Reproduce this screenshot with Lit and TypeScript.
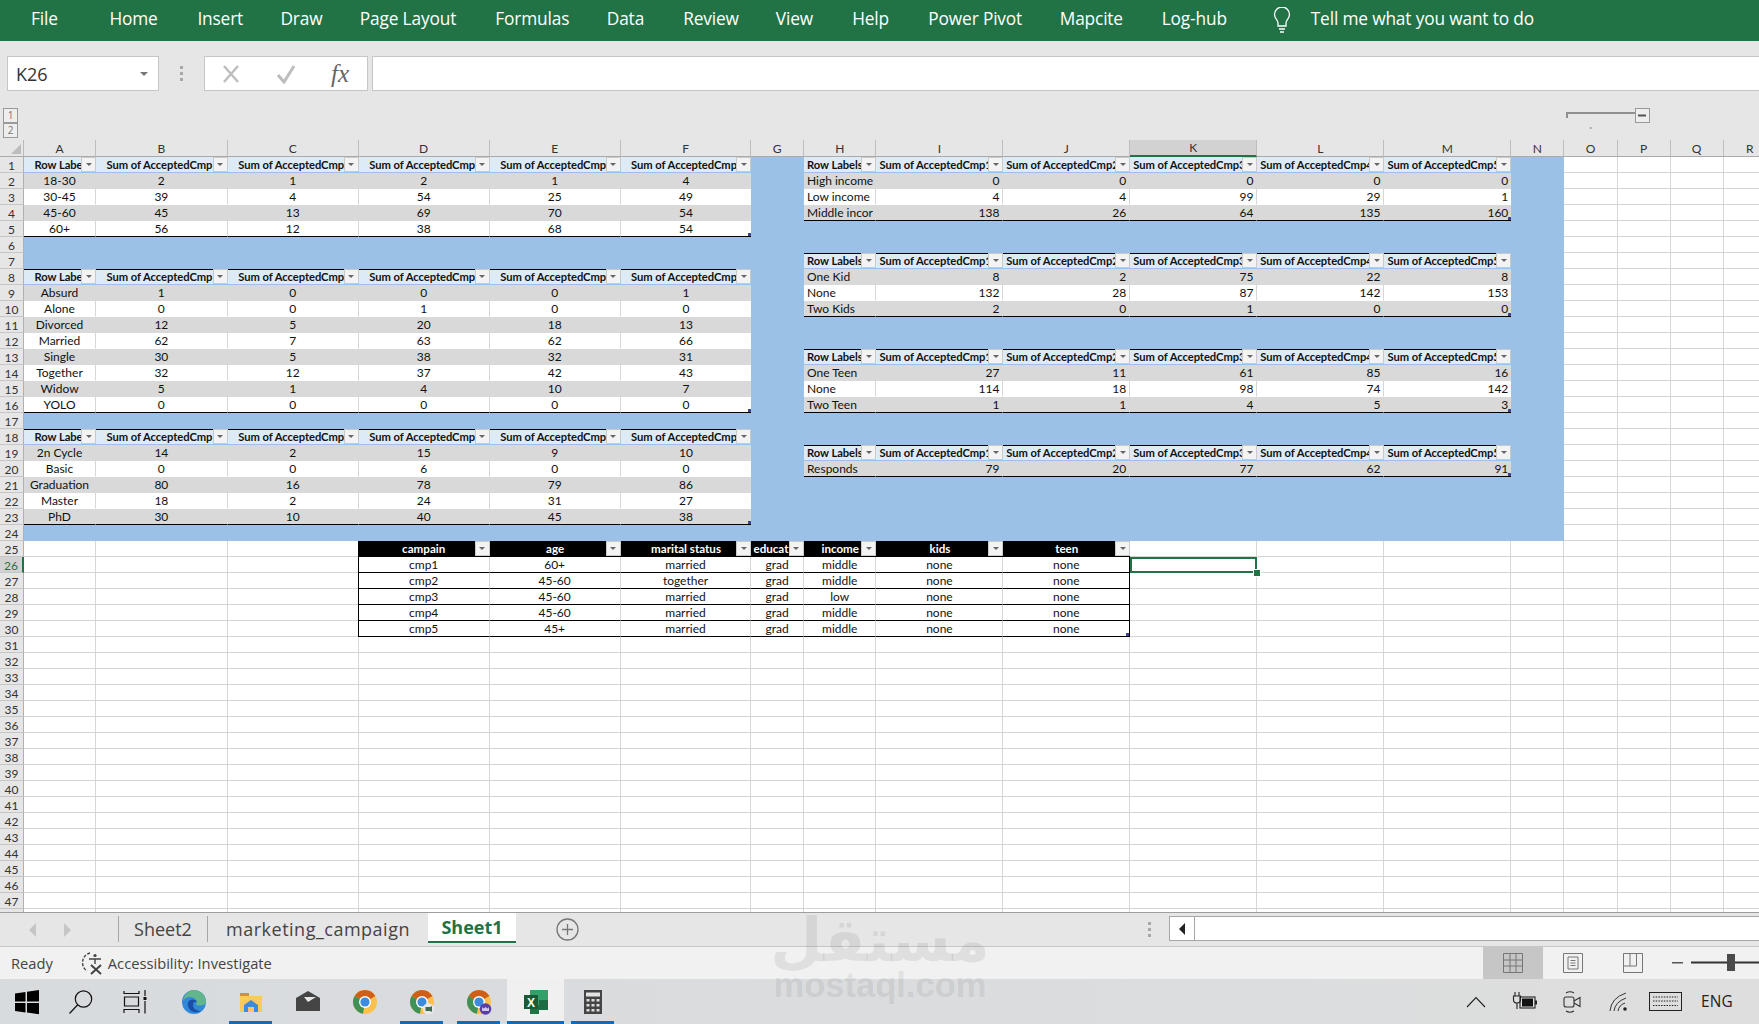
import { LitElement, css, html, svg } from "lit";
import { customElement } from "lit/decorators.js";

const COL_WIDTHS = [72, 131.7, 131, 131, 130.9, 130.9, 52.5, 72.5, 126.9, 126.8, 127.2, 127.1, 126.9, 53.1, 53.1, 53.1, 53.1, 53.2];
const LETTERS = "ABCDEFGHIJKLMNOPQR".split("");
const ROW_COUNT = 48;

type Cell = { text: string; cls: string; filter?: boolean };

const key = (c: number, r: number) => `${c}:${r}`;

function buildCells() {
  const cells = new Map<string, Cell>();
  // blue block behind the pivots
  for (let r = 1; r <= 24; r++) {
    for (let c = 0; c <= 13; c++) cells.set(key(c, r), { text: "", cls: "blue" });
  }

  const pivot = (col: number, row: number, head: string[], rows: (string | number)[][], side: "left" | "right", top: boolean) => {
    head.forEach((h, i) => {
      cells.set(key(col + i, row), {
        text: h,
        cls: `hdr ${side === "left" ? "hdr-l" : "hdr-r"} ${top ? "top" : ""}`,
        filter: true,
      });
    });
    rows.forEach((vals, ri) => {
      const isLast = ri === rows.length - 1;
      vals.forEach((v, ci) => {
        const align = side === "left" ? "center" : ci === 0 ? "start" : "end";
        const band = ri % 2 === 0 ? "band" : "plain";
        const edge = ci === vals.length - 1 ? "edge" : "";
        const corner = isLast && ci === vals.length - 1 ? "corner" : "";
        cells.set(key(col + ci, row + 1 + ri), {
          text: String(v),
          cls: `${align} ${band} ${edge} ${isLast ? "last" : ""} ${corner}`,
        });
      });
    });
  };

  const leftHead = ["Row Labe", ...Array(5).fill("Sum of AcceptedCmp")];
  const rightHead = ["Row Labels", "Sum of AcceptedCmp1", "Sum of AcceptedCmp2", "Sum of AcceptedCmp3", "Sum of AcceptedCmp4", "Sum of AcceptedCmp5"];

  pivot(0, 1, leftHead, [
    ["18-30", 2, 1, 2, 1, 4],
    ["30-45", 39, 4, 54, 25, 49],
    ["45-60", 45, 13, 69, 70, 54],
    ["60+", 56, 12, 38, 68, 54],
  ], "left", false);
  pivot(0, 8, leftHead, [
    ["Absurd", 1, 0, 0, 0, 1],
    ["Alone", 0, 0, 1, 0, 0],
    ["Divorced", 12, 5, 20, 18, 13],
    ["Married", 62, 7, 63, 62, 66],
    ["Single", 30, 5, 38, 32, 31],
    ["Together", 32, 12, 37, 42, 43],
    ["Widow", 5, 1, 4, 10, 7],
    ["YOLO", 0, 0, 0, 0, 0],
  ], "left", true);
  pivot(0, 18, leftHead, [
    ["2n Cycle", 14, 2, 15, 9, 10],
    ["Basic", 0, 0, 6, 0, 0],
    ["Graduation", 80, 16, 78, 79, 86],
    ["Master", 18, 2, 24, 31, 27],
    ["PhD", 30, 10, 40, 45, 38],
  ], "left", true);

  pivot(7, 1, rightHead, [
    ["High income", 0, 0, 0, 0, 0],
    ["Low income", 4, 4, 99, 29, 1],
    ["Middle incor", 138, 26, 64, 135, 160],
  ], "right", false);
  pivot(7, 7, rightHead, [
    ["One Kid", 8, 2, 75, 22, 8],
    ["None", 132, 28, 87, 142, 153],
    ["Two Kids", 2, 0, 1, 0, 0],
  ], "right", true);
  pivot(7, 13, rightHead, [
    ["One Teen", 27, 11, 61, 85, 16],
    ["None", 114, 18, 98, 74, 142],
    ["Two Teen", 1, 1, 4, 5, 3],
  ], "right", true);
  pivot(7, 19, rightHead, [["Responds", 79, 20, 77, 62, 91]], "right", true);

  // black summary table
  ["campain", "age", "marital status", "educat", "income", "kids", "teen"].forEach((h, i) => {
    const extra = `${h === "educat" ? "black-l" : ""} ${i === 0 ? "box-l" : ""}`;
    cells.set(key(3 + i, 25), { text: h, cls: `black ${extra}`, filter: true });
  });
  [
    ["cmp1", "60+", "married", "grad", "middle", "none", "none"],
    ["cmp2", "45-60", "together", "grad", "middle", "none", "none"],
    ["cmp3", "45-60", "married", "grad", "low", "none", "none"],
    ["cmp4", "45-60", "married", "grad", "middle", "none", "none"],
    ["cmp5", "45+", "married", "grad", "middle", "none", "none"],
  ].forEach((vals, ri) => {
    vals.forEach((v, ci) => {
      const extra = `${ci === 0 ? "box-l" : ""} ${ci === 6 ? "box-r" : ""} ${ri === 4 && ci === 6 ? "corner" : ""}`;
      cells.set(key(3 + ci, 26 + ri), { text: v, cls: `center boxed ${extra}` });
    });
  });

  cells.set(key(10, 26), { text: "", cls: "sel" });
  return cells;
}

const CELLS = buildCells();

const RIBBON = ["File", "Home", "Insert", "Draw", "Page Layout", "Formulas", "Data", "Review", "View", "Help", "Power Pivot", "Mapcite", "Log-hub"];

const chrome = (badge?: unknown) => svg`
  <svg width="26" height="26" viewBox="0 0 26 26">
    <circle cx="13" cy="13" r="12" fill="#fbc04e"/>
    <path d="M13 13 L2.6 7 A12 12 0 0 1 23.4 7 Z" fill="#cf5f17"/>
    <path d="M13 13 L2.6 7 A12 12 0 0 0 11 24.8 Z" fill="#3f9157"/>
    <circle cx="13" cy="13" r="6" fill="#fff"/>
    <circle cx="13" cy="13" r="4.6" fill="#3d8bdc"/>
    ${badge}
  </svg>`;

const TASK_ICONS = [
  { cls: "narrow", icon: svg`<svg width="26" height="26" viewBox="0 0 26 26" fill="#000"><path d="M1 4.5 L11.5 3 V12.5 H1Z M13 2.8 L25 1 V12.5 H13Z M1 14 H11.5 V23.5 L1 22Z M13 14 H25 V25.2 L13 23.6Z"/></svg>` },
  { cls: "narrow", icon: svg`<svg width="26" height="26" viewBox="0 0 26 26" fill="none" stroke="#111" stroke-width="1.2"><circle cx="15.5" cy="10" r="8.2"/><path d="M9.5 16 L1.5 24.5"/></svg>` },
  { cls: "narrow gap", icon: svg`<svg width="26" height="26" viewBox="0 0 26 26" fill="none" stroke="#111" stroke-width="1.2"><path d="M2 2 V4.5 H17 V2 M2.5 8 H16.5 V17 H2.5Z M2 24 V20.5 H17 V24 M23 1 V7 M23 12 V24.5"/><rect x="21.5" y="8" width="3" height="3" fill="#111" stroke="none"/></svg>` },
  { icon: svg`<svg width="26" height="26" viewBox="0 0 26 26"><circle cx="13" cy="13" r="12" fill="#2f88d8"/><path d="M13 1 A12 12 0 0 1 25 13 C25 16 20 17.5 15 16 C17 12 14 8 9 8 C5 8 3 10 2 12 C3 5 8 1 13 1Z" fill="#63b58d"/><path d="M14 11 C9 9 6 13 7 17 C8 22 14 25 20 22 C16 22 12 20 12 16 C12 13 14 12 16 13 C16 12 15 11.5 14 11Z" fill="#1a4fa8"/></svg>` },
  { active: true, icon: svg`<svg width="26" height="26" viewBox="0 0 26 26"><path d="M2 4 H11 V8 H2Z" fill="#c6933f"/><rect x="2" y="7" width="22" height="16" fill="#fcc95c"/><path d="M6 23 V16 L13 11 L20 16 V23 H16 V18 H10 V23Z" fill="#3b8be0"/></svg>` },
  { icon: svg`<svg width="26" height="26" viewBox="0 0 26 26"><path d="M1 9 L13 2 L25 9 V22 H1Z" fill="#454545"/><path d="M9 8 H21 L13 13Z" fill="#e8e8e8"/></svg>` },
  { icon: chrome() },
  { active: true, icon: chrome(svg`<circle cx="19.5" cy="20" r="5.8" fill="#e8e8e8"/><path d="M16.5 18 H21 L23 17 V23 L21 22 H16.5Z" fill="#3f6b4f"/>`) },
  { active: true, icon: chrome(svg`<circle cx="19.5" cy="20" r="5.8" fill="#5a3ea6"/><path d="M16 22 V18 L17.5 19.5 L19.5 18 L21.5 19.5 L23 18 V22Z" fill="#cfc6ea"/>`) },
  { active: true, current: true, icon: svg`<svg width="26" height="26" viewBox="0 0 26 26"><path d="M7 1 H25 V21 H7Z" fill="#33a067"/><path d="M16 11 H25 V21 H16Z" fill="#1d6b42"/><path d="M7 16 H16 V25 H7Z" fill="#217346"/><rect x="1" y="6" width="14" height="14" fill="#185c37"/><text x="8" y="17.5" text-anchor="middle" font-family="Liberation Sans" font-weight="700" font-size="12" fill="#fff">X</text></svg>` },
  { active: true, icon: svg`<svg width="26" height="26" viewBox="0 0 26 26"><rect x="4" y="1" width="18" height="24" fill="#454545"/><rect x="6" y="3.5" width="14" height="4" fill="#e4e4e4"/><path d="M6.5 10 h3 v2.5 h-3z M11.5 10 h3 v2.5 h-3z M16.5 10 h3 v2.5 h-3z M6.5 15 h3 v2.5 h-3z M11.5 15 h3 v2.5 h-3z M16.5 15 h3 v2.5 h-3z M6.5 20 h3 v2.5 h-3z M11.5 20 h3 v2.5 h-3z M16.5 20 h3 v2.5 h-3z" fill="#ddd"/></svg>` },
];

@customElement("app-root")
export class AppRoot extends LitElement {
  static override styles = css`
    :host {
      display: block;
      width: 1759px;
      height: 1024px;
      overflow: hidden;
      position: relative;
      font-family: "Open Sans", "Liberation Sans", sans-serif;
      background: #e6e6e6;
    }
    .app {
      display: flex;
      flex-direction: column;
      height: 1024px;
    }

    /* ---------- ribbon ---------- */
    .ribbon {
      height: 41px;
      box-sizing: border-box;
      background: #217346;
      color: #fff;
      padding: 0 0 5px 31px;
      display: grid;
      grid-template-columns: 78.4px 88px 83px 79.4px 135.5px 111.5px 76.5px 92.5px 76.4px 76.2px 131.4px 102px 111px 38px auto;
      align-items: center;
      font-size: 17.3px;
      letter-spacing: -0.15px;
    }
    .ribbon svg {
      display: block;
      margin-top: 5px;
    }

    /* ---------- formula bar ---------- */
    .formula {
      display: flex;
      height: 35px;
      margin-top: 15px;
      padding-left: 7px;
    }
    .name-box {
      width: 152px;
      background: #fff;
      border: 1px solid #c6c6c6;
      box-sizing: border-box;
      display: flex;
      align-items: center;
      justify-content: space-between;
      padding: 0 10px 0 8px;
      font-size: 18px;
      color: #333;
    }
    .caret {
      width: 0;
      height: 0;
      border: 4px solid transparent;
      border-top: 4px solid #777;
      border-bottom: 0;
    }
    .grip {
      width: 45px;
      display: flex;
      align-items: center;
      justify-content: center;
    }
    .fx-box {
      width: 164px;
      background: #fff;
      border: 1px solid #c6c6c6;
      box-sizing: border-box;
      display: flex;
      align-items: center;
      padding-left: 16px;
      gap: 35px;
    }
    .fx {
      font-family: "Liberation Serif", serif;
      font-style: italic;
      font-size: 25px;
      color: #666;
    }
    .formula-input {
      flex: 1;
      margin-left: 4px;
      background: #fff;
      border: 1px solid #c6c6c6;
      border-right: 0;
    }

    /* ---------- outline strip ---------- */
    .outline {
      height: 49px;
      box-sizing: border-box;
      padding: 17px 0 0 3px;
      display: flex;
      justify-content: space-between;
    }
    .levels {
      display: flex;
      flex-direction: column;
    }
    .levels span {
      width: 15px;
      height: 15px;
      box-sizing: border-box;
      border: 1px solid #9a9a9a;
      background: #eee;
      font-size: 10px;
      line-height: 13px;
      text-align: center;
      color: #777;
    }
    .slider {
      margin-right: 109px;
      width: 84px;
      height: 22px;
    }

    /* ---------- sheet grid ---------- */
    .sheet {
      height: 772px;
      overflow: hidden;
      display: grid;
      grid-template-rows: 17px repeat(47, 16px) 16px;
      font-family: Lato, "Liberation Sans", sans-serif;
      font-size: 12px;
      color: #111;
      background: #fff;
    }
    .sheet > div {
      box-sizing: border-box;
      min-width: 0;
    }
    .corner-hd {
      background: #e6e6e6;
      border-right: 1px solid #bbb;
      border-bottom: 1px solid #aaa;
      position: relative;
    }
    .corner-hd::after {
      content: "";
      position: absolute;
      right: 2px;
      bottom: 2px;
      width: 10px;
      height: 10px;
      background: #bcbcbc;
      clip-path: polygon(100% 0, 100% 100%, 0 100%);
    }
    .col-hd {
      background: #e6e6e6;
      border-right: 1px solid #bdbdbd;
      border-bottom: 1px solid #aaa;
      display: flex;
      align-items: center;
      justify-content: center;
      font-size: 12px;
      color: #333;
    }
    .col-hd.on {
      background: #d2d2d2;
      border-bottom: 2px solid #217346;
    }
    .row-hd {
      background: #e6e6e6;
      border-right: 1px solid #b0b0b0;
      border-bottom: 1px solid #c6c6c6;
      padding-top: 1px;
      display: flex;
      align-items: center;
      justify-content: center;
      font-size: 12px;
      color: #333;
    }
    .row-hd.on {
      background: #d2d2d2;
      border-right: 2px solid #217346;
      color: #217346;
    }
    .cell {
      position: relative;
      overflow: hidden;
      white-space: nowrap;
      line-height: 16px;
      border-right: 1px solid #d6d6d6;
      border-bottom: 1px solid #d6d6d6;
      background: #fff;
    }
    .cell.blue {
      background: #9bc2e6;
      border-color: #9bc2e6;
    }
    .cell.center {
      text-align: center;
    }
    .cell.start {
      text-align: left;
      padding-left: 3px;
    }
    .cell.end {
      text-align: right;
      padding-right: 3px;
    }
    .cell.band {
      background: #d9d9d9;
      border-color: #d9d9d9;
    }
    .cell.plain {
      border-bottom-color: #fff;
    }
    .cell.edge {
      border-right: 0;
    }
    .cell.last {
      border-bottom: 1px solid #000;
    }
    .cell.hdr {
      background: #ddebf7;
      border: 0;
      border-bottom: 1px solid #9bc2e6;
      font-weight: 700;
      padding-right: 15px;
      font-size: 11.2px;
      letter-spacing: -0.05px;
    }
    .cell.hdr-l {
      padding-left: 10.5px;
    }
    .cell.hdr-r {
      padding-left: 3px;
    }
    .cell.hdr.top {
      box-shadow: inset 0 1px 0 #000;
    }
    .cell.black {
      background: #000;
      border: 0;
      color: #fff;
      font-weight: 700;
      text-align: center;
      font-size: 11.6px;
    }
    .cell.black-l {
      text-align: left;
      padding-left: 2px;
    }
    .cell.boxed {
      border-bottom: 1px solid #000;
    }
    .cell.box-l {
      margin-left: -1px;
    }
    .cell.boxed.box-l {
      border-left: 1px solid #000;
    }
    .cell.box-r {
      border-right: 1px solid #000;
    }
    .cell.corner::after {
      content: "";
      position: absolute;
      right: 0;
      bottom: 0;
      width: 3px;
      height: 3px;
      background: #3f3f9f;
    }
    .cell.sel {
      overflow: visible;
      z-index: 2;
      border: 0;
      box-shadow: inset 0 0 0 2px #217346;
    }
    .cell.sel::after {
      content: "";
      position: absolute;
      right: -3px;
      bottom: -3px;
      width: 6px;
      height: 6px;
      background: #217346;
      outline: 1px solid #fff;
    }
    .filter {
      position: absolute;
      right: 0;
      top: 0;
      width: 15px;
      height: 15px;
      box-sizing: border-box;
      border: 1px solid #cacaca;
      background: #f3f3f3;
      display: flex;
      align-items: center;
      justify-content: center;
    }
    .filter::after {
      content: "";
      border: 3px solid transparent;
      border-top: 3px solid #666;
      border-bottom: 0;
    }

    /* ---------- sheet tabs ---------- */
    .tabs {
      height: 34px;
      box-sizing: border-box;
      border-top: 1px solid #9e9e9e;
      display: flex;
      font-size: 18px;
      color: #444;
    }
    .nav {
      width: 118px;
      display: flex;
      align-items: center;
      padding-left: 29px;
      box-sizing: border-box;
      gap: 28px;
    }
    .tab {
      height: 26px;
      margin-top: 3px;
      box-sizing: border-box;
      border-left: 1px solid #a6a6a6;
      display: flex;
      align-items: center;
      justify-content: center;
    }
    .tab.a {
      width: 89px;
    }
    .tab.b {
      width: 221px;
      letter-spacing: 0.5px;
    }
    .tab.on {
      width: 88px;
      height: 30px;
      margin-top: 0;
      border: 0;
      border-bottom: 2px solid #217346;
      background: #fff;
      color: #217346;
      font-weight: 700;
    }
    .add {
      width: 102px;
      display: flex;
      align-items: center;
      justify-content: center;
      margin-right: 0;
    }
    .tab-grip {
      margin-left: auto;
      width: 40px;
      display: flex;
      align-items: center;
      justify-content: center;
    }
    .scroll {
      width: 590px;
      height: 25px;
      margin-top: 3px;
      box-sizing: border-box;
      border: 1px solid #a6a6a6;
      border-right: 0;
      background: #fff;
      display: flex;
    }
    .scroll span {
      width: 24px;
      border-right: 1px solid #a6a6a6;
      display: flex;
      align-items: center;
      justify-content: center;
    }
    .scroll span::after {
      content: "";
      border: 6px solid transparent;
      border-right: 6px solid #222;
      border-left: 0;
    }

    /* ---------- status bar ---------- */
    .status {
      height: 33px;
      box-sizing: border-box;
      border-top: 1px solid #c6c6c6;
      background: #f1f1f1;
      display: flex;
      align-items: center;
      padding-left: 11px;
      font-size: 14.7px;
      color: #444;
    }
    .a11y {
      margin-left: 28px;
      display: flex;
      align-items: center;
      gap: 3px;
    }
    .views {
      margin-left: auto;
      display: flex;
      align-self: stretch;
    }
    .views span {
      width: 60px;
      display: flex;
      align-items: center;
      justify-content: center;
    }
    .views span.on {
      background: #c6c6c6;
    }
    .zoom {
      width: 96px;
      display: block;
    }

    /* ---------- taskbar ---------- */
    .taskbar {
      height: 45px;
      background: linear-gradient(90deg, #d8dbde, #dadcde 50%, #dedede);
      display: flex;
    }
    .task {
      width: 57px;
      box-sizing: border-box;
      display: flex;
      align-items: center;
      justify-content: center;
      padding-top: 1px;
      position: relative;
    }
    .task.narrow {
      width: 54px;
    }
    .task.gap {
      margin-right: 3px;
    }
    .task.current {
      background: #f0f0f0;
    }
    .task.active::after {
      content: "";
      position: absolute;
      left: 7px;
      right: 7px;
      bottom: 0;
      height: 3px;
      background: #0f6cbd;
    }
    .task.current::after {
      left: 0;
      right: 0;
    }
    .tray {
      margin-left: auto;
      display: flex;
      align-items: center;
      padding-right: 26px;
      color: #222;
    }
    .tray svg {
      display: block;
    }
    .eng {
      margin-left: 19px;
      font-size: 15.4px;
      letter-spacing: 0.2px;
    }

    /* watermark lies across the bottom bars */
    .mark {
      position: absolute;
      left: 754px;
      top: 905px;
      width: 252px;
      text-align: center;
      color: rgba(80, 80, 80, 0.11);
      pointer-events: none;
      font-weight: 700;
    }
    .mark .ar {
      font-family: "DejaVu Sans", sans-serif;
      font-size: 60px;
      line-height: 70px;
    }
    .mark .en {
      font-family: "Liberation Sans", sans-serif;
      font-size: 34.5px;
      line-height: 36px;
      margin-top: -8px;
    }
  `;

  private renderSheet() {
    const columns = `24px ${COL_WIDTHS.map((w) => `${w}px`).join(" ")}`;
    const rows = [];
    for (let r = 1; r <= ROW_COUNT; r++) {
      rows.push(html`<div class="row-hd ${r === 26 ? "on" : ""}">${r < ROW_COUNT ? r : ""}</div>`);
      for (let c = 0; c < LETTERS.length; c++) {
        const cell = CELLS.get(key(c, r));
        rows.push(html`<div class="cell ${cell?.cls ?? ""}">${cell?.text ?? ""}${cell?.filter ? html`<i class="filter"></i>` : ""}</div>`);
      }
    }
    return html`
      <div class="sheet" style="grid-template-columns:${columns}">
        <div class="corner-hd"></div>
        ${LETTERS.map((l) => html`<div class="col-hd ${l === "K" ? "on" : ""}">${l}</div>`)}
        ${rows}
      </div>
    `;
  }

  private renderTaskbar() {
    return html`
      <div class="taskbar">
        ${TASK_ICONS.map(
          (t) => html`<div class="task ${t.cls ?? ""} ${t.active ? "active" : ""} ${t.current ? "current" : ""}">${t.icon}</div>`
        )}
        <div class="tray">
          <svg width="22" height="14" viewBox="0 0 22 14" fill="none" stroke="#222" stroke-width="1.1"><path d="M2 12 L11 2.5 L20 12"/></svg>
          <svg style="margin-left:25px" width="26" height="22" viewBox="0 0 26 22" fill="none" stroke="#222" stroke-width="1.1"><path d="M3 1 V5 M7 1 V5 M1.5 5 H8.5 V9 Q8.5 12 5 12 Q1.5 12 1.5 9Z M5 12 V18"/><rect x="8" y="6" width="15" height="11"/><rect x="10" y="7.5" width="11" height="8" fill="#111" stroke="none"/><rect x="23" y="9.5" width="2" height="4" fill="#222" stroke="none"/></svg>
          <svg style="margin-left:24px" width="20" height="24" viewBox="0 0 20 24" fill="none" stroke="#333" stroke-width="1.1"><path d="M4 3 Q8 .5 12 3 M4 21 Q8 23.5 12 21"/><rect x="2" y="7" width="10" height="10" rx="2"/><path d="M12 11 L18 7.5 V16.5 L12 13"/></svg>
          <svg style="margin-left:27px" width="20" height="20" viewBox="0 0 20 20" fill="none" stroke="#333" stroke-width="1"><path d="M1 19 Q2 6 17 1 M5 19 Q6 10 17 6 M9 19 Q10 13 16 11"/><circle cx="16" cy="17" r="1.8" fill="#222" stroke="none"/></svg>
          <svg style="margin-left:20px" width="33" height="19" viewBox="0 0 33 19" fill="none" stroke="#222" stroke-width="1"><rect x=".5" y=".5" width="32" height="18"/><path d="M4 5 H29 M4 9 H29 M4 13.5 H29" stroke-dasharray="1.5 1.2"/></svg>
          <span class="eng">ENG</span>
        </div>
      </div>
    `;
  }

  override render() {
    return html`
      <div class="app">
        <div class="ribbon">
          ${RIBBON.map((t) => html`<span>${t}</span>`)}
          <svg width="18" height="27" viewBox="0 0 18 27" fill="none" stroke="#fff" stroke-width="1.3"><path d="M5 19 V16 C5 13 1.5 11.5 1.5 7.5 A7.5 7.5 0 0 1 16.5 7.5 C16.5 11.5 13 13 13 16 V19Z M6 22 H12 M7 25 H11"/></svg>
          <span>Tell me what you want to do</span>
        </div>

        <div class="formula">
          <div class="name-box"><span>K26</span><i class="caret"></i></div>
          <div class="grip">
            <svg width="3" height="16" fill="#a8a8a8"><rect width="3" height="3"/><rect y="6" width="3" height="3"/><rect y="12" width="3" height="3"/></svg>
          </div>
          <div class="fx-box">
            <svg width="20" height="20" viewBox="0 0 20 20" fill="none" stroke="#bdbdbd" stroke-width="2.4"><path d="M3 2 L17 18 M17 2 L3 18"/></svg>
            <svg width="20" height="20" viewBox="0 0 20 20" fill="none" stroke="#bdbdbd" stroke-width="3"><path d="M2 11 L8 18 L18 2"/></svg>
            <span class="fx">fx</span>
          </div>
          <div class="formula-input"></div>
        </div>

        <div class="outline">
          <div class="levels"><span>1</span><span>2</span></div>
          <svg class="slider" viewBox="0 0 84 22" fill="none">
            <path d="M1 10 V5 H70" stroke="#8f8f8f" stroke-width="2"/>
            <rect x=".5" y=".5" width="14" height="14" transform="translate(69 0)" fill="#eee" stroke="#999"/>
            <rect x="72" y="6.5" width="8" height="2" fill="#555"/>
            <rect x="24" y="19" width="1.5" height="2" fill="#999"/>
          </svg>
        </div>

        ${this.renderSheet()}

        <div class="tabs">
          <div class="nav">
            <svg width="7" height="14"><path d="M7 0 V14 L0 7Z" fill="#c6c6c6"/></svg>
            <svg width="7" height="14"><path d="M0 0 V14 L7 7Z" fill="#c6c6c6"/></svg>
          </div>
          <div class="tab a">Sheet2</div>
          <div class="tab b">marketing_campaign</div>
          <div class="tab on">Sheet1</div>
          <div class="add">
            <svg width="23" height="23" viewBox="0 0 23 23" fill="none" stroke="#777" stroke-width="1.3"><circle cx="11.5" cy="11.5" r="10.5"/><path d="M11.5 6 V17 M6 11.5 H17"/></svg>
          </div>
          <div class="tab-grip">
            <svg width="3" height="16" fill="#a8a8a8"><rect width="3" height="3"/><rect y="6" width="3" height="3"/><rect y="12" width="3" height="3"/></svg>
          </div>
          <div class="scroll"><span></span></div>
        </div>

        <div class="status">
          <span>Ready</span>
          <div class="a11y">
            <svg width="24" height="24" viewBox="0 0 24 24" fill="none" stroke="#444" stroke-width="1.4"><path d="M9 2 A10 10 0 0 0 6 20" stroke-dasharray="3 1.5"/><circle cx="14" cy="4.5" r="1.6" fill="#444" stroke="none"/><path d="M8 8 H20 M14 8 V13"/><path d="M10 14 L20 23 M20 14 L10 23" stroke-width="2"/></svg>
            <span>Accessibility: Investigate</span>
          </div>
          <div class="views">
            <span class="on"><svg width="20" height="20" viewBox="0 0 20 20" fill="none" stroke="#777"><path d="M.5 .5 H19.5 V19.5 H.5Z M7 .5 V19.5 M13 .5 V19.5 M.5 7 H19.5 M.5 13 H19.5"/></svg></span>
            <span><svg width="20" height="20" viewBox="0 0 20 20" fill="none" stroke="#777"><path d="M.5 .5 H19.5 V19.5 H.5Z M5 4 H15 V16 H5Z M7.5 7.5 H12.5 M7.5 10 H12.5 M7.5 12.5 H12.5"/></svg></span>
            <span><svg width="20" height="20" viewBox="0 0 20 20" fill="none" stroke="#777"><path d="M.5 .5 H19.5 V19.5 H.5Z M.5 13 H13.5 V.5 M7 .5 V13"/></svg></span>
          </div>
          <svg class="zoom" height="18" viewBox="0 0 96 18">
            <rect x="9" y="8" width="11" height="1.5" fill="#555"/>
            <rect x="28" y="7.5" width="68" height="2" fill="#333"/>
            <rect x="64" y="0" width="8" height="17" fill="#4a4a4a"/>
          </svg>
        </div>

        ${this.renderTaskbar()}
      </div>

      <div class="mark">
        <div class="ar" dir="rtl" lang="ar">مستقل</div>
        <div class="en">mostaql.com</div>
      </div>
    `;
  }
}

declare global {
  interface HTMLElementTagNameMap {
    "app-root": AppRoot;
  }
}
